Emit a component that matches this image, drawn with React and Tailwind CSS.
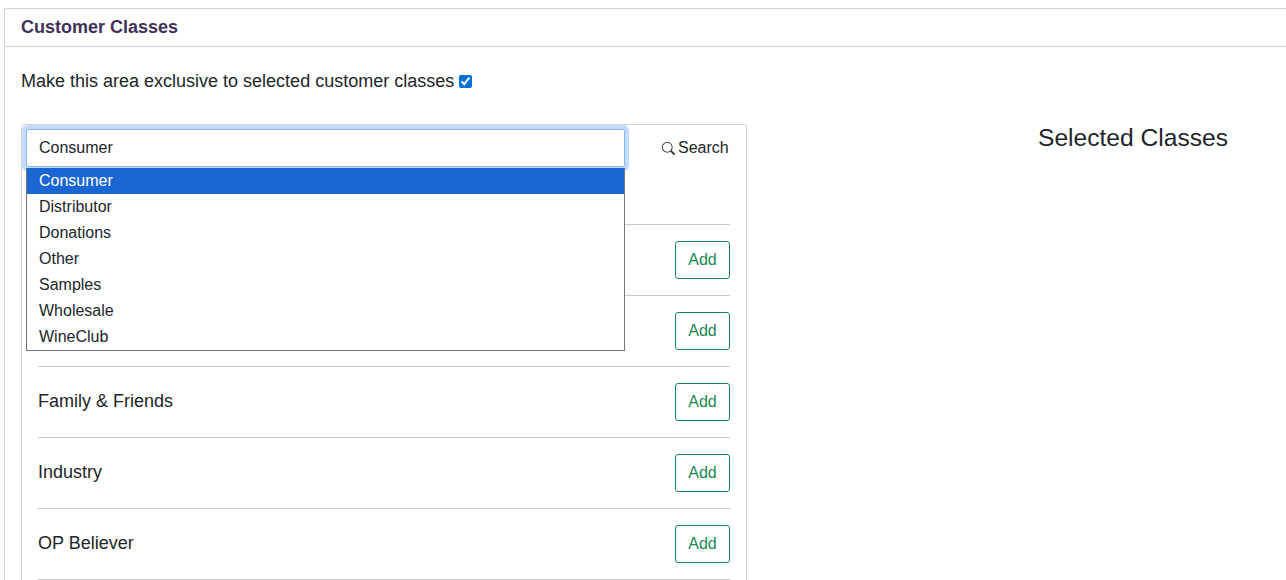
import React from "react";
import { BsSearch } from "react-icons/bs";

const options = ["Consumer", "Distributor", "Donations", "Other", "Samples", "Wholesale", "WineClub"];
const rows = ["", "", "Family & Friends", "Industry", "OP Believer"];

function Row({ label }) {
  return (
    <div className="h-[71px] flex items-center justify-between border-t border-[#c9c9c9]">
      <span className="text-[18px] text-[#212529] leading-[27px] pb-[2px]">{label}</span>
      <button className="w-[55px] h-[38px] flex items-center justify-center border border-[#198754] rounded-[3px] text-[16px] text-[#198754] bg-white">
        Add
      </button>
    </div>
  );
}

export default function App() {
  return (
    <div className="h-[580px] overflow-hidden bg-white font-['Liberation_Sans',Arial,sans-serif] text-[#212529] pt-2 pl-1">
      <div className="border-t border-l border-[#d2d2d2] rounded-tl-[3px]">
        <div className="h-[38px] flex items-center pl-4 border-b border-[#d2d2d2]">
          <h2 className="text-[18px] font-bold text-[#413159] leading-6 pb-[1px]">Customer Classes</h2>
        </div>
        <div className="pl-4 pt-[21px] flex">
          <div className="w-[726px] shrink-0">
            <label className="flex items-center text-[18px] leading-[27px] whitespace-nowrap">
              Make this area exclusive to selected customer classes
              <input type="checkbox" defaultChecked readOnly className="w-[13px] h-[13px] ml-[5px] m-0 accent-[#0072d6] appearance-auto" />
            </label>
            <div className="relative mt-[29px] border border-[#d2d2d2] rounded-[3px] pt-1 pl-1 pb-0 w-[726px]">
              <div className="flex items-start">
                <div className="relative w-[599px] h-[38px] border border-[#86b7fe] rounded-[2px] shadow-[0_0_0_4px_rgba(13,110,253,0.25)] bg-white flex items-center pl-3 text-[16px]">
                  Consumer
                </div>
                <div className="ml-[37px] h-[38px] flex items-center gap-[3px] text-[16px]">
                  <BsSearch className="w-[13px] h-[13px]" />
                  <span>Search</span>
                </div>
              </div>
              <div className="absolute z-10 left-1 top-[43px] w-[599px] bg-white border-x border-b border-[#767676]">
                {options.map((o, i) => (
                  <div
                    key={o}
                    className={
                      i === 0
                        ? "h-[26px] leading-[26px] pl-3 text-[16px] bg-[#1a67d4] text-white"
                        : "h-[26px] leading-[26px] pl-3 text-[16px] text-[#212529]"
                    }
                  >
                    {o}
                  </div>
                ))}
              </div>
              <div className="mt-[57px] ml-3 mr-4">
                {rows.map((r, i) => (
                  <Row key={i} label={r} />
                ))}
                <div className="border-t border-[#c9c9c9] h-10" />
              </div>
            </div>
          </div>
          <div className="pl-[291px] pt-[52px]">
            <h3 className="text-[24.6px] leading-[36px] text-[#212529] whitespace-nowrap">Selected Classes</h3>
          </div>
        </div>
      </div>
    </div>
  );
}
